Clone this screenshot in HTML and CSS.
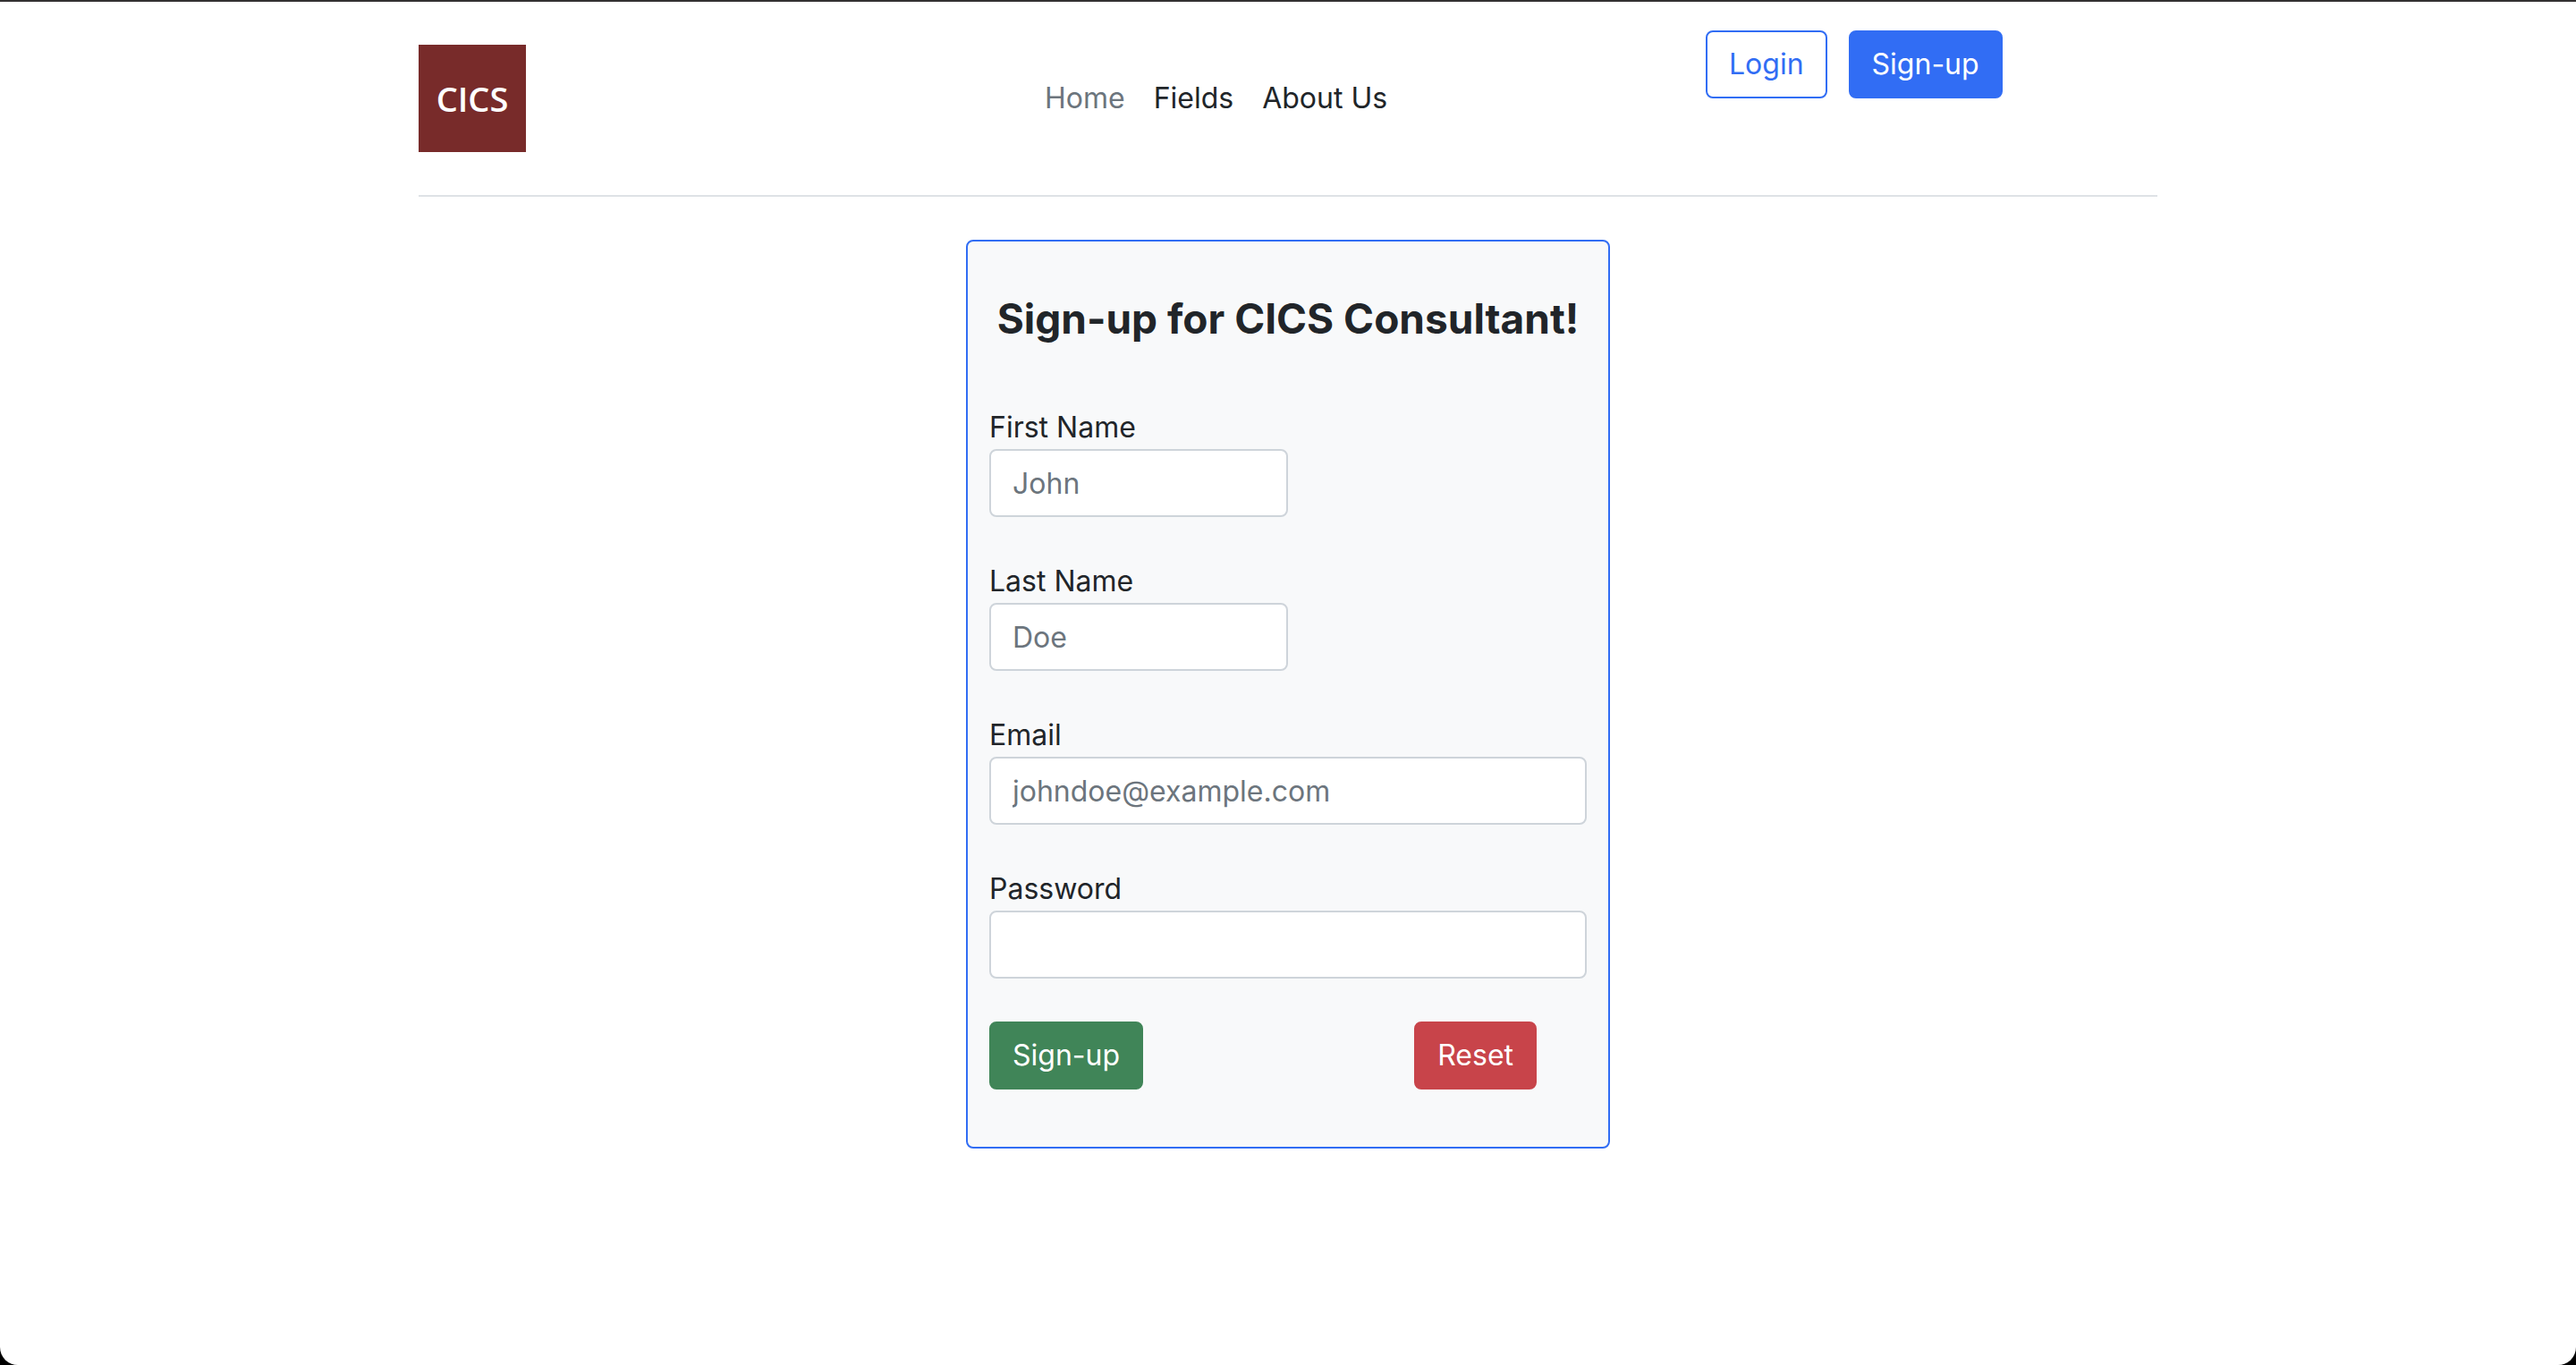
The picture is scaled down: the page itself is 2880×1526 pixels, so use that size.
FILE: index.html
```html
<!DOCTYPE html>
<html lang="en">
<head>
<meta charset="utf-8">
<title>CICS Consultant - Sign-up</title>
<meta name="viewport" content="width=device-width, initial-scale=1">
<link rel="stylesheet" href="styles.css">
</head>
<body>
<div class="container">
  <header class="site-header">
    <a class="logo" href="#">CICS</a>
    <nav class="site-nav">
      <a class="nav-link active" href="#">Home</a>
      <a class="nav-link" href="#">Fields</a>
      <a class="nav-link" href="#">About Us</a>
    </nav>
    <div class="account-actions">
      <button type="button" class="btn btn-outline">Login</button>
      <button type="button" class="btn btn-primary">Sign-up</button>
    </div>
  </header>
  <main>
    <form class="signup-card">
      <h1 class="signup-title">Sign-up for CICS Consultant!</h1>
      <div class="field field-half">
        <label for="first-name">First Name</label>
        <input id="first-name" type="text" placeholder="John">
      </div>
      <div class="field field-half">
        <label for="last-name">Last Name</label>
        <input id="last-name" type="text" placeholder="Doe">
      </div>
      <div class="field">
        <label for="email">Email</label>
        <input id="email" type="email" placeholder="johndoe@example.com">
      </div>
      <div class="field">
        <label for="password">Password</label>
        <input id="password" type="password">
      </div>
      <div class="form-actions">
        <button type="submit" class="btn btn-success">Sign-up</button>
        <button type="reset" class="btn btn-danger">Reset</button>
      </div>
    </form>
  </main>
</div>
</body>
</html>
```
FILE: styles.css
```css
*,
*::before,
*::after {
  box-sizing: border-box;
}

html {
  background: #000;
}

body {
  margin: 0;
  min-height: 100vh;
  border-top: 2px solid #333132;
  border-radius: 0 0 20px 20px;
  background: #fff;
  color: #212529;
  font-family: Inter, "Liberation Sans", sans-serif;
  font-size: 32px;
  line-height: 48px;
}

.container {
  width: 67.5%;
  margin: 0 auto;
}

.site-header {
  display: grid;
  grid-template-columns: 700fr 739fr 505fr;
  align-items: center;
  margin-bottom: 48px;
  padding: 32px 0;
  border-bottom: 2px solid #dee2e6;
}

.logo {
  display: flex;
  align-items: center;
  justify-content: center;
  width: 120px;
  height: 120px;
  margin: 16px 0;
  background: #782b2a;
  color: #fff;
  font-family: "Open Sans", "Noto Sans", sans-serif;
  font-size: 38px;
  font-weight: 600;
  text-decoration: none;
}

.site-nav {
  display: flex;
  gap: 32px;
}

.nav-link {
  color: #212529;
  text-decoration: none;
  white-space: nowrap;
}

.nav-link.active {
  color: #6c757d;
}

.account-actions {
  display: flex;
  align-self: start;
  gap: 24px;
}

.btn {
  padding: 12px 24px;
  border: 2px solid transparent;
  border-radius: 8px;
  color: #fff;
  font: inherit;
  white-space: nowrap;
  cursor: pointer;
}

.btn-outline {
  border-color: #316df4;
  background: #fff;
  color: #316df4;
}

.btn-primary {
  border-color: #316df4;
  background: #316df4;
}

.btn-success {
  border-color: #408558;
  background: #408558;
}

.btn-danger {
  border-color: #c8444a;
  background: #c8444a;
}

.signup-card {
  display: flex;
  flex-direction: column;
  gap: 48px;
  max-width: 720px;
  margin: 0 auto;
  padding: 56px 24px 64px;
  border: 2px solid #316df4;
  border-radius: 8px;
  background: #f8f9fa;
}

.signup-title {
  margin: 0 0 20px;
  font-size: 46px;
  font-weight: 700;
  line-height: 60px;
  text-align: center;
}

.field {
  display: flex;
  flex-direction: column;
}

.field-half {
  width: 50%;
}

.field input {
  width: 100%;
  height: 76px;
  padding: 12px 24px;
  border: 2px solid #ced4da;
  border-radius: 8px;
  background: #fff;
  color: #212529;
  font: inherit;
}

.field input::placeholder {
  color: #6c757d;
  opacity: 1;
}

.form-actions {
  display: flex;
  justify-content: space-between;
  padding-right: 56px;
}
```
